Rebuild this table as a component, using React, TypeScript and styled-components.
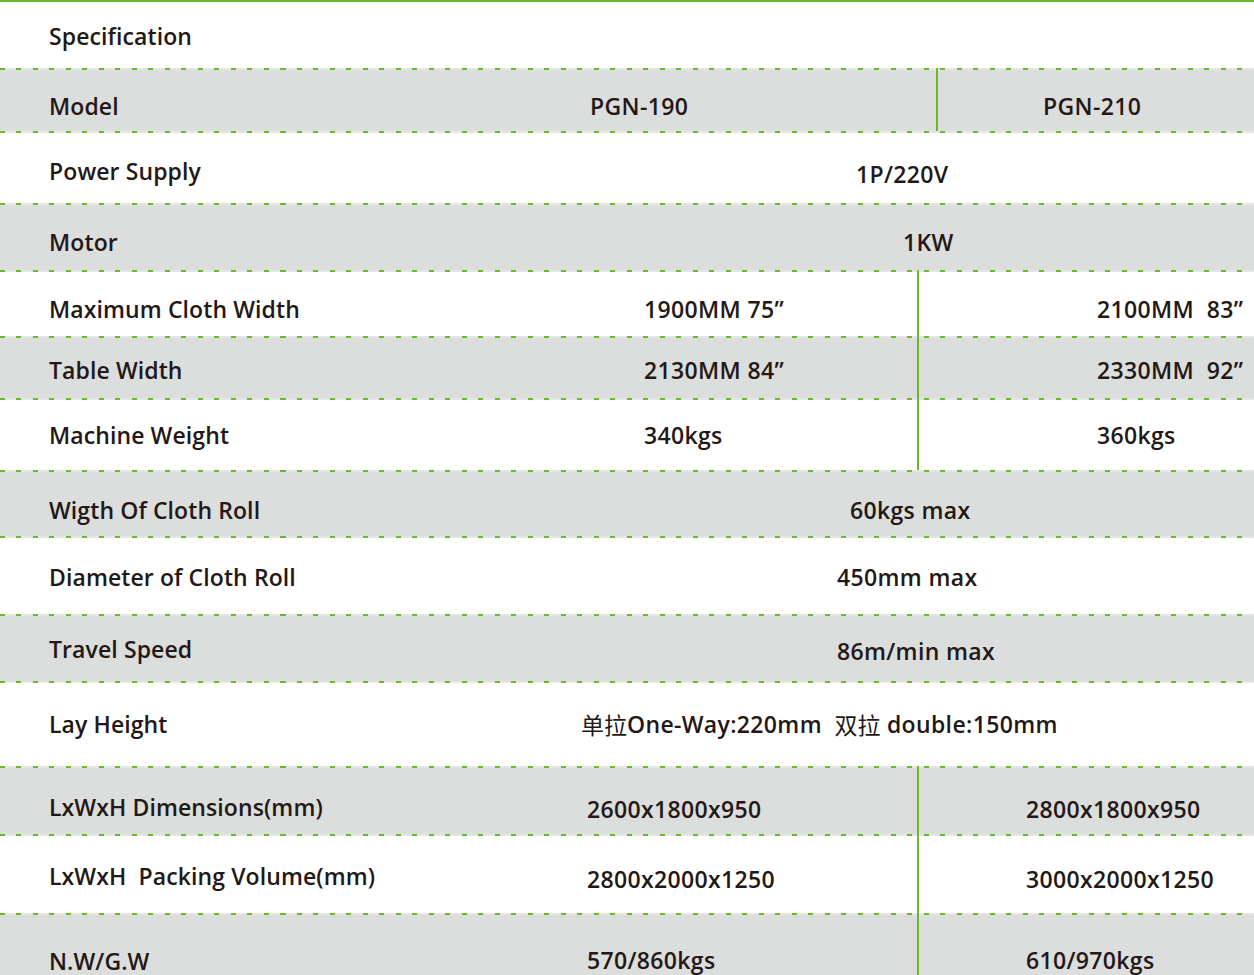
import React from "react";
import styled, { createGlobalStyle } from "styled-components";

const GREEN = "#6cb92e";
const GRAY = "#dcdddd";

const Global = createGlobalStyle`
  html, body { margin: 0; padding: 0; background: #ffffff; }
  body { font-family: "Open Sans", "Noto Sans CJK SC", sans-serif; }
`;

const Sheet = styled.div`
  width: 1254px;
  border-top: 2px solid ${GREEN};
  color: #231815;
  font-family: "Open Sans", "Noto Sans CJK SC", sans-serif;
  font-size: 23px;
  font-weight: 600;
`;

const Row = styled.div<{ $h: number; $gray?: boolean; $cols: string; $dash?: boolean }>`
  display: grid;
  grid-template-columns: ${(p) => p.$cols};
  height: ${(p) => p.$h}px;
  box-sizing: border-box;
  background-color: ${(p) => (p.$gray ? GRAY : "#ffffff")};
  background-image: ${(p) =>
    p.$dash
      ? `repeating-linear-gradient(90deg, ${GREEN} 0 5px, transparent 5px 16.5px), linear-gradient(#e4e5e5, #e4e5e5)`
      : "none"};
  background-size: 100% 2px, 100% 2px;
  background-position: 0 0, 0 0;
  background-repeat: no-repeat;
`;

const Cell = styled.div<{ $pt: number; $pl?: number }>`
  display: flex;
  align-items: center;
  box-sizing: border-box;
  padding-top: ${(p) => p.$pt}px;
  padding-left: ${(p) => p.$pl ?? 0}px;
  white-space: pre;
  min-width: 0;
`;

const LabelCell = styled(Cell)`
  letter-spacing: 0.1px;
`;

const ValueCell = styled(Cell)`
  letter-spacing: 0.35px;
`;

const SplitCell = styled(ValueCell)`
  border-left: 2px solid ${GREEN};
`;

const Cjk = styled.span`
  font-family: "Noto Sans CJK SC", sans-serif;
  font-weight: 400;
  letter-spacing: 0;
`;

type Single = { kind: "single"; value: React.ReactNode; x: number; vp: number };
type Split = { kind: "split"; v1: string; v2: string; x1: number; split: number; x2: number; vp: number };
type Plain = { kind: "plain" };
type RowDef = { label: string; h: number; gray?: boolean; lp: number } & (Single | Split | Plain);

const rows: RowDef[] = [
  { label: "Specification", h: 66, lp: 1, kind: "plain" },
  { label: "Model", h: 63, gray: true, lp: 13, kind: "split", v1: "PGN-190", v2: "PGN-210", x1: 590, split: 936, x2: 1043, vp: 13 },
  { label: "Power Supply", h: 72, lp: 8, kind: "single", value: "1P/220V", x: 856, vp: 13 },
  { label: "Motor", h: 67, gray: true, lp: 11, kind: "single", value: "1KW", x: 903, vp: 11 },
  { label: "Maximum Cloth Width", h: 66, lp: 12, kind: "split", v1: "1900MM 75’’", v2: "2100MM  83’’", x1: 644, split: 917, x2: 1097, vp: 12 },
  { label: "Table Width", h: 62, gray: true, lp: 6, kind: "split", v1: "2130MM 84’’", v2: "2330MM  92’’", x1: 644, split: 917, x2: 1097, vp: 6 },
  { label: "Machine Weight", h: 72, lp: 2, kind: "split", v1: "340kgs", v2: "360kgs", x1: 644, split: 917, x2: 1097, vp: 2 },
  { label: "Wigth Of Cloth Roll", h: 66, gray: true, lp: 14, kind: "single", value: "60kgs max", x: 850, vp: 14 },
  { label: "Diameter of Cloth Roll", h: 78, lp: 4, kind: "single", value: "450mm max", x: 837, vp: 4 },
  { label: "Travel Speed", h: 67, gray: true, lp: 3, kind: "single", value: "86m/min max", x: 837, vp: 7 },
  {
    label: "Lay Height",
    h: 85,
    lp: 1,
    kind: "single",
    value: (
      <>
        <Cjk>单拉</Cjk>One-Way:220mm  <Cjk>双拉</Cjk> double:150mm
      </>
    ),
    x: 581,
    vp: 1,
  },
  { label: "LxWxH Dimensions(mm)", h: 68, gray: true, lp: 14, kind: "split", v1: "2600x1800x950", v2: "2800x1800x950", x1: 587, split: 917, x2: 1026, vp: 18 },
  { label: "LxWxH  Packing Volume(mm)", h: 79, lp: 5, kind: "split", v1: "2800x2000x1250", v2: "3000x2000x1250", x1: 587, split: 917, x2: 1026, vp: 11 },
  { label: "N.W/G.W", h: 70, gray: true, lp: 26, kind: "split", v1: "570/860kgs", v2: "610/970kgs", x1: 587, split: 917, x2: 1026, vp: 24 },
];

function SpecRow({ r, first }: { r: RowDef; first: boolean }) {
  if (r.kind === "plain") {
    return (
      <Row $h={r.h} $gray={r.gray} $cols="1fr" $dash={!first}>
        <LabelCell $pt={r.lp} $pl={49}>{r.label}</LabelCell>
      </Row>
    );
  }
  if (r.kind === "single") {
    return (
      <Row $h={r.h} $gray={r.gray} $cols={`${r.x}px 1fr`} $dash={!first}>
        <LabelCell $pt={r.lp} $pl={49}>{r.label}</LabelCell>
        <ValueCell $pt={r.vp}>{r.value}</ValueCell>
      </Row>
    );
  }
  return (
    <Row $h={r.h} $gray={r.gray} $cols={`${r.x1}px ${r.split - r.x1}px 1fr`} $dash={!first}>
      <LabelCell $pt={r.lp} $pl={49}>{r.label}</LabelCell>
      <ValueCell $pt={r.vp}>{r.v1}</ValueCell>
      <SplitCell $pt={r.vp} $pl={r.x2 - r.split - 2}>{r.v2}</SplitCell>
    </Row>
  );
}

export default function App() {
  return (
    <>
      <Global />
      <Sheet>
        {rows.map((r, i) => (
          <SpecRow key={r.label} r={r} first={i === 0} />
        ))}
      </Sheet>
    </>
  );
}
